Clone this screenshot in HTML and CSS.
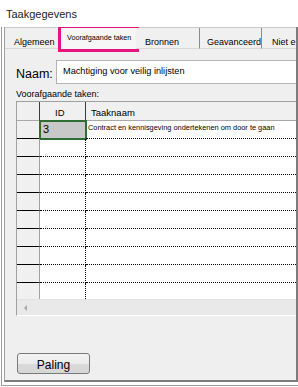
FILE: index.html
```html
<!DOCTYPE html>
<html>
    <head>
        <title>Taakgegevens</title>
        <link rel="stylesheet" href="styles.css">
    </head>
    <body>
        <div class="title">Taakgegevens</div>
        <div class="frame">
            <div class="dialog">
                <div class="tabs">
                    <div class="tab tab-algemeen">Algemeen</div>
                    <div class="tab active">Voorafgaande taken</div>
                    <div class="tab tab-bronnen">Bronnen</div>
                    <div class="tab tab-geav">Geavanceerd</div>
                    <div class="tab tab-niet">Niet e</div>
                </div>
                <div class="panel">
                    <div class="name-row">
                        <label class="name-label">Naam:</label>
                        <div class="name-input">Machtiging voor veilig inlijsten</div>
                    </div>
                    <div class="list-label">Voorafgaande taken:</div>
                    <div class="grid">
                        <div class="row head">
                            <div class="rh"></div>
                            <div class="id">ID</div>
                            <div class="nm">Taaknaam</div>
                        </div>
                        <div class="row">
                            <div class="rh"></div>
                            <div class="id selected">3</div>
                            <div class="nm small">Contract en kennisgeving ondertekenen om door te gaan</div>
                        </div>
                        <div class="row"><div class="rh"></div><div class="id"></div><div class="nm"></div></div>
                        <div class="row"><div class="rh"></div><div class="id"></div><div class="nm"></div></div>
                        <div class="row"><div class="rh"></div><div class="id"></div><div class="nm"></div></div>
                        <div class="row"><div class="rh"></div><div class="id"></div><div class="nm"></div></div>
                        <div class="row"><div class="rh"></div><div class="id"></div><div class="nm"></div></div>
                        <div class="row"><div class="rh"></div><div class="id"></div><div class="nm"></div></div>
                        <div class="row"><div class="rh"></div><div class="id"></div><div class="nm"></div></div>
                        <div class="row"><div class="rh"></div><div class="id"></div><div class="nm"></div></div>
                        <div class="row last"><div class="rh"></div><div class="id"></div><div class="nm"></div></div>
                        <div class="hscroll"><span class="arrow"></span></div>
                    </div>
                    <button class="paling">Paling</button>
                </div>
            </div>
        </div>
    </body>
</html>
```

FILE: styles.css
```css
body{
    margin: 0;
    width: 298px;
    height: 387px;
    overflow: hidden;
    background: #ffffff;
    font-family: "Liberation Sans", Arial, sans-serif;
    color: #000;
}
.title{
    height: 27px;
    box-sizing: border-box;
    padding: 7px 0 0 6px;
    font-size: 11px;
    line-height: 14px;
    color: #222;
}
.frame{
    margin-left: 1px;
    border-left: 1px solid #9a9a9a;
    border-bottom: 1px solid #9a9a9a;
    padding: 0 0 3px 2px;
}
.dialog{
    border-left: 1px solid #a0a0a0;
    border-right: 2px solid #7c7c7c;
    border-bottom: 2px solid #7c7c7c;
    overflow: hidden;
}
.tabs{
    display: flex;
    height: 22px;
    border-top: 1px solid #c8c8c8;
    box-sizing: border-box;
    background: #ffffff;
}
.tab{
    box-sizing: border-box;
    background: #f0f0f0;
    border-right: 1px solid #8c8c8c;
    border-bottom: 1px solid #d8d8d8;
    font-size: 9px;
    line-height: 11px;
    padding-top: 9px;
    white-space: nowrap;
    overflow: hidden;
}
.tab-algemeen{
    width: 56px;
    padding-left: 9px;
    border-right: none;
}
.active{
    width: 75px;
    background: #f6f6f6;
    outline: 3px solid #e5157f;
    font-size: 7.2px;
    padding-top: 4px;
    padding-left: 6px;
    border-right: none;
    border-bottom: none;
}
.tab-bronnen{
    width: 64px;
    padding-left: 9px;
}
.tab-geav{
    width: 62px;
    padding-left: 7px;
}
.tab-niet{
    flex: 1;
    padding-left: 10px;
    border-right: none;
}
.panel{
    height: 331px;
    background: #efefef;
    display: flex;
    flex-direction: column;
}
.name-row{
    display: flex;
    align-items: center;
    margin-top: 11px;
    height: 24px;
}
.name-label{
    width: 40px;
    padding-left: 11px;
    font-size: 12.5px;
    padding-top: 3px;
}
.name-input{
    flex: 1;
    height: 24px;
    box-sizing: border-box;
    background: #fff;
    border: 1px solid #b4b4b4;
    border-right: none;
    font-size: 9.2px;
    line-height: 20px;
    padding-left: 6px;
}
.list-label{
    margin: 3px 0 0 11px;
    height: 14px;
    font-size: 9px;
    line-height: 14px;
}
.grid{
    margin-left: 11px;
    border-top: 1px solid #a0a0a0;
    border-left: 1px solid #a0a0a0;
    border-bottom: 1px solid #ffffff;
    background: #fff;
}
.row{
    display: flex;
    height: 18px;
}
.rh{
    width: 23px;
    box-sizing: border-box;
    background: #f0f0f0;
    border-right: 1px solid #a0a0a0;
    border-bottom: 1px solid #000;
}
.id{
    width: 46px;
    box-sizing: border-box;
    border-right: 1px dotted #000;
    border-bottom: 1px dotted #000;
    font-size: 11px;
    line-height: 17px;
    padding-left: 3px;
}
.nm{
    flex: 1;
    box-sizing: border-box;
    border-bottom: 1px dotted #000;
    padding-left: 2px;
    font-size: 9.5px;
    line-height: 17px;
    white-space: nowrap;
}
.row.head{
    height: 19px;
}
.head .rh,
.head .id,
.head .nm{
    background: #f0f0f0;
    border-bottom: 1px solid #a8a8a8;
    line-height: 22px;
    font-size: 9.5px;
}
.head .rh,
.head .id{
    border-right: 1px solid #3c3c3c;
}
.head .id{
    padding-left: 15px;
}
.head .nm{
    padding-left: 5px;
}
.selected{
    background: #c8c8c8;
    outline: 2px solid #2e6e32;
    outline-offset: -1px;
}
.small{
    font-size: 7.4px;
    line-height: 13px;
    color: #000;
}
.row.last{
    height: 16px;
}
.row.last .rh,
.row.last .id,
.row.last .nm{
    border-bottom: none;
}
.hscroll{
    height: 16px;
    background: #e9e9e9;
    border-top: 1px solid #e2e2e2;
    box-sizing: border-box;
    display: flex;
    align-items: center;
    padding-left: 7px;
}
.arrow{
    width: 0;
    height: 0;
    border-top: 3px solid transparent;
    border-bottom: 3px solid transparent;
    border-right: 3px solid #a8a8a8;
}
.paling{
    margin: 37px 0 0 12px;
    width: 73px;
    height: 21px;
    border: 1px solid #7a7a7a;
    border-radius: 3px;
    background: linear-gradient(#f3f3f3 0%, #ebebeb 50%, #dadada 51%, #d6d6d6 100%);
    font-family: "Liberation Sans", Arial, sans-serif;
    font-size: 12px;
    padding: 4px 0 0 0;
    line-height: 15px;
    color: #000;
}
```
